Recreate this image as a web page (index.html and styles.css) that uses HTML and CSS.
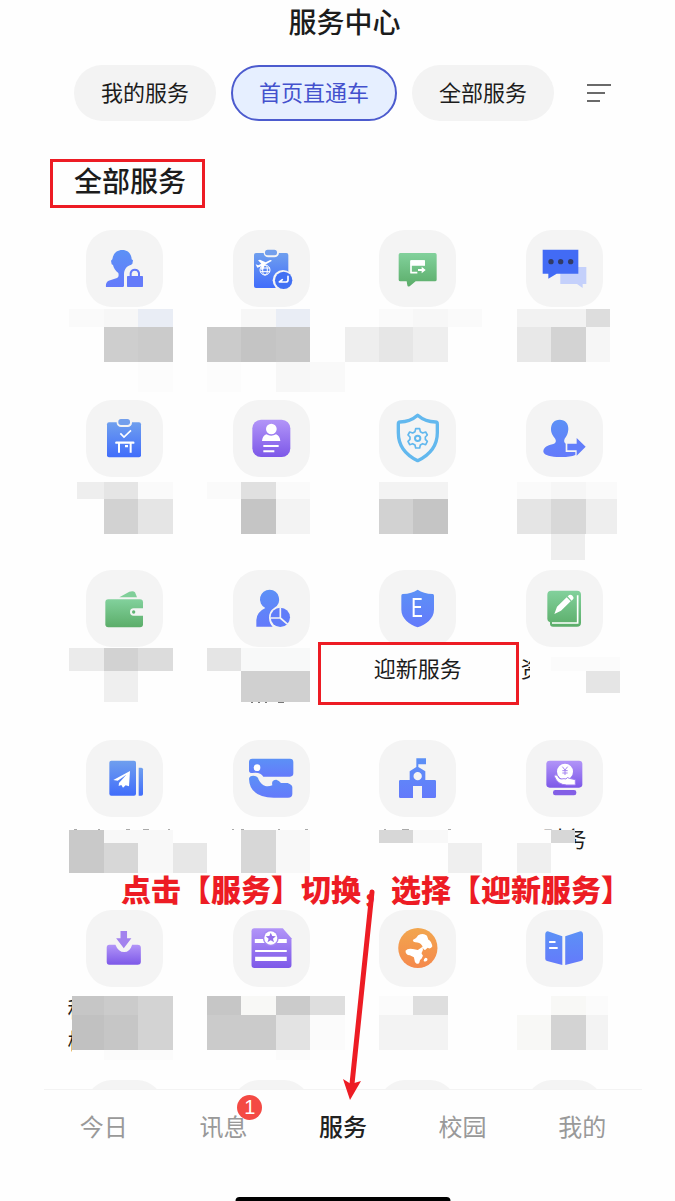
FILE: index.html
```
<!DOCTYPE html>
<html lang="zh-CN">
<head>
    <meta charset="UTF-8">
    <meta name="viewport" content="width=device-width, initial-scale=1.0">
    <link rel="stylesheet" href="styles.css">
    <title>服务中心</title>
</head>
<body>
    <svg class="defs" width="0" height="0" aria-hidden="true">
        <defs>
            <linearGradient id="blue" x1="0" y1="0" x2="0" y2="1"><stop offset="0" stop-color="#6f9fee"/><stop offset="1" stop-color="#416dfb"/></linearGradient>
            <linearGradient id="indigo" x1="0" y1="0" x2="0" y2="1"><stop offset="0" stop-color="#5c91f6"/><stop offset="1" stop-color="#647afb"/></linearGradient>
            <linearGradient id="purple" x1="0" y1="0" x2="0" y2="1"><stop offset="0" stop-color="#b295f8"/><stop offset="1" stop-color="#7d58e8"/></linearGradient>
            <linearGradient id="green" x1="0" y1="0" x2="0" y2="1"><stop offset="0" stop-color="#82d19c"/><stop offset="1" stop-color="#5bad69"/></linearGradient>
            <linearGradient id="orange" x1="0" y1="0" x2="0" y2="1"><stop offset="0" stop-color="#f2a64e"/><stop offset="1" stop-color="#f5894c"/></linearGradient>
        </defs>
    </svg>
    <div class="app">
        <header>
            <h1>服务中心</h1>
            <div class="tabs">
                <button class="tab">我的服务</button>
                <button class="tab tab-active">首页直通车</button>
                <button class="tab">全部服务</button>
                <button class="filter" aria-label="筛选">
                    <svg width="24" height="20" viewBox="0 0 24 20" stroke="#3a3a3a" stroke-width="1.6"><path d="M0 2h24M0 10h18M0 18h13"/></svg>
                </button>
            </div>
        </header>
        <main>
            <h2 class="marked">全部服务</h2>
            <div class="grid">
                <a class="service" href="#">
                    <svg class="icon" viewBox="78 30 231 231">
                        <path fill="url(#indigo)" d="M187 90c17 0 27 11 28 28l4 3-2 11-5 3c-12 3-20 13-20 28v34q0 4-4 4h-50q-2-14 8-19l25-8q7-3 4-15c-9-7-14-14-16-24l-4-2-2-11 4-4c2-17 13-28 30-28z"/>
                        <rect x="201" y="168" width="48" height="33" rx="2" fill="#647bfa"/>
                        <path fill="none" stroke="#647bfa" stroke-width="6" d="M212 170v-11a13 13 0 0 1 25 0v11"/>
                    </svg>
                </a>
                <a class="service" href="#">
                    <svg class="icon" viewBox="518 30 231 231">
                        <rect x="581" y="99" width="103" height="105" rx="6" fill="url(#blue)"/>
                        <rect x="610" y="84" width="46" height="28" rx="14" fill="#f4f4f4"/>
                        <rect x="614" y="89" width="36" height="17" rx="8" fill="#739fec"/>
                        <path fill="#fff" d="M586 133l8 3 9-5-10-10 6-2 17 8 12-6q6-2 6 2l-21 12-4 13-6 3 0-12-12 4z"/>
                        <g fill="none" stroke="#fff" stroke-width="3"><circle cx="614" cy="150" r="15"/><ellipse cx="614" cy="150" rx="7" ry="15"/><path d="M600 144h29M600 155h29"/></g>
                        <circle cx="668" cy="181" r="31" fill="#f4f4f4"/>
                        <circle cx="670" cy="181" r="26" fill="#4170f3"/>
                        <path fill="none" stroke="#fff" stroke-width="5" stroke-linecap="round" stroke-linejoin="round" d="M683 169v11q0 6-6 6h-20l9-7"/>
                    </svg>
                </a>
                <a class="service" href="#">
                    <svg class="icon" viewBox="147 30 231 231">
                        <path fill="url(#green)" d="M211 99h104q5 0 5 5v75q0 5-5 5h-58l-17 14q-7 4-8-2l-2-12h-19q-5 0-5-5v-75q0-5 5-5z"/>
                        <path fill="none" stroke="#fff" stroke-width="5" stroke-linejoin="round" d="M262 158h-19v-35h38v13"/>
                        <path fill="#fff" d="M242 121h43v16h-43zM264 147h11v-7l12 10-12 10v-7h-11z"/>
                    </svg>
                </a>
                <a class="service" href="#">
                    <svg class="icon" viewBox="587 30 231 231">
                        <path fill="#c4d0fb" d="M690 141h78v51h-11v12l-17-12h-50z"/>
                        <path fill="#426bf5" d="M637 89h107v72h-65l-25 15v-15h-17z"/>
                        <g fill="#313b66"><circle cx="662" cy="125" r="8"/><circle cx="691" cy="125" r="8"/><circle cx="721" cy="125" r="8"/></g>
                    </svg>
                </a>

                <a class="service" href="#">
                    <svg class="icon" viewBox="78 30 231 231">
                        <rect x="141" y="97" width="102" height="105" rx="6" fill="url(#blue)"/>
                        <rect x="170" y="82" width="46" height="29" rx="13" fill="#f4f4f4"/>
                        <rect x="175" y="87" width="35" height="18" rx="8" fill="#739fec"/>
                        <path fill="none" stroke="#fff" stroke-width="5" d="M181 130l11 11 21-20"/>
                        <path fill="none" stroke="#fff" stroke-width="7" stroke-linecap="round" d="M169 158h51"/>
                        <path fill="none" stroke="#fff" stroke-width="6" d="M177 158v30M212 158v30"/>
                        <path fill="#fff" d="M195 165h9v7h-9z"/>
                    </svg>
                </a>
                <a class="service" href="#">
                    <svg class="icon" viewBox="518 30 231 231">
                        <rect x="576" y="89" width="114" height="112" rx="26" fill="url(#purple)"/>
                        <circle cx="633" cy="117" r="16" fill="#fff"/>
                        <path fill="#fff" d="M605 153q1-15 13-20 14 8 29 0 12 5 13 20z"/>
                        <path fill="none" stroke="#fff" stroke-width="6" d="M609 168h46M609 184h33"/>
                    </svg>
                </a>
                <a class="service" href="#">
                    <svg class="icon" viewBox="147 30 231 231">
                        <path fill="none" stroke="#62b8ee" stroke-width="10" stroke-linejoin="round" d="M263 76q23 20 54 20 5 0 5 6v26c0 42-24 67-59 84-35-17-58-42-58-84v-26q0-6 5-6 30 0 53-20z"/>
                        <path fill="none" stroke="#62b8ee" stroke-width="5" stroke-linejoin="round" d="M257 116h12l2 9 7 4 9-3 5 9-6 6v7l6 6-5 10-9-3-7 4-2 9h-12l-2-9-7-4-9 3-5-10 6-6v-7l-6-6 5-9 9 3 7-4z"/>
                        <circle cx="263" cy="145" r="8" fill="none" stroke="#62b8ee" stroke-width="6"/>
                    </svg>
                </a>
                <a class="service" href="#">
                    <svg class="icon" viewBox="587 30 231 231">
                        <path fill="url(#indigo)" d="M688 89c17 0 27 12 26 28-1 15-5 21-11 29q-4 10 3 15v25h29v9q-18 7-47 6c-25 0-47-5-49-16 0-14 14-20 30-23q11-4 6-15c-7-10-13-16-13-30 0-16 9-28 26-28z"/>
                        <path fill="#627dfa" d="M711 161h28v-17l27 26-27 27v-16h-28z"/>
                    </svg>
                </a>

                <a class="service" href="#">
                    <svg class="icon" viewBox="78 28 231 231">
                        <path fill="#80cf99" d="M178 110l30-17q12-4 17 2l6 15z"/>
                        <rect x="136" y="116" width="113" height="84" rx="9" fill="url(#green)"/>
                        <path fill="#f4f4f4" d="M249 143h-28a11 11 0 0 0 0 22h28z"/>
                        <circle cx="221" cy="154" r="5" fill="#62b676"/>
                    </svg>
                </a>
                <a class="service" href="#">
                    <svg class="icon" viewBox="518 28 231 231">
                        <path fill="url(#indigo)" d="M628 87a29 29 0 0 1 14 54q-17 11-16 31 1 17 11 26h-49v-20q1-24 27-36a29 29 0 0 1 13-55z"/>
                        <circle cx="660" cy="170" r="29" fill="#617df9"/>
                        <path fill="none" stroke="#f4f4f4" stroke-width="5" d="M660 140v32h-30M660 172l22 19"/>
                    </svg>
                </a>
                <a class="service" href="#">
                    <svg class="icon" viewBox="207 28 231 231">
                        <path fill="url(#indigo)" d="M323 87q17 12 45 13 4 0 4 5v42c0 27-25 45-49 53-24-8-49-26-49-53v-42q0-5 4-5 28-1 45-13z"/>
                        <path fill="none" stroke="#fff" stroke-width="6" d="M335 115h-24v51h25M311 139h22"/>
                    </svg>
                    <span class="label highlight">迎新服务</span>
                </a>
                <a class="service" href="#">
                    <svg class="icon" viewBox="648 28 231 231">
                        <path fill="url(#green)" d="M724 90h77q12 0 12 12v84q0 12-12 12h-72q-9 0-9-9v-4q-8-2-8-10v-73q0-12 12-12z"/>
                        <path fill="none" stroke="#fff" stroke-width="5" d="M803 104v83h-77"/>
                        <path fill="#fff" d="M733 160l8-22 29-28 12 12-29 28zM773 107l5-4q4-2 8 1l4 5q2 4-1 7l-4 4z"/>
                    </svg>
                    <span class="label label-four">资</span>
                </a>

                <a class="service" href="#">
                    <svg class="icon" viewBox="78 28 231 231">
                        <rect x="148" y="90" width="80" height="105" rx="6" fill="url(#blue)"/>
                        <path fill="url(#blue)" d="M236 111h8q5 0 5 5v74q0 5-5 5h-8z"/>
                        <path fill="#fff" d="M160 148l50-27-3 46-10-3-8 7-5-8-8 3 1-9 22-25-26 18z"/>
                    </svg>
                </a>
                <a class="service" href="#">
                    <svg class="icon" viewBox="518 28 231 231">
                        <path fill="url(#indigo)" d="M576 84h113q10 0 10 10v34q0 10-10 10h-80q-9-15-33-11-10 0-10-7V94q0-10 10-10z"/>
                        <circle cx="590" cy="111" r="10" fill="#fff"/>
                        <path fill="url(#indigo)" d="M566 144q1-9 13-9 14 1 16 12 9 16 20 19 10 2 21-2-4-17 12-17 8 3 14 10h20q14 5 14 13v20q0 11-13 11h-43q-73-2-74-57z"/>
                    </svg>
                </a>
                <a class="service" href="#">
                    <svg class="icon" viewBox="147 28 231 231">
                        <path fill="url(#indigo)" fill-rule="evenodd" d="M259 83h29v18h-23v8l21 13v26h28q4 0 4 4v46q0 4-4 4h-38v-36h-27v36h-38q-4 0-4-4v-46q0-4 4-4h28v-26l20-13zM263 124a12 12 0 1 0 0 25 12 12 0 0 0 0-25z"/>
                    </svg>
                </a>
                <a class="service" href="#">
                    <svg class="icon" viewBox="587 28 231 231">
                        <rect x="648" y="90" width="108" height="81" rx="10" fill="url(#purple)"/>
                        <rect x="668" y="178" width="70" height="16" rx="7" fill="#835fe6"/>
                        <circle cx="704" cy="123" r="24" fill="#fff"/>
                        <path fill="none" stroke="#a483f0" stroke-width="3" d="M696 108l8 10 8-10M704 118v15M696 120h16M696 127h16"/>
                        <path fill="#fff" stroke="#a07ef0" stroke-width="3" d="M672 137q2-7 9-3 6 13 12 11 9-2 14 0 3-8 10-2l18 4v16h-26q-28-1-37-26z"/>
                    </svg>
                    <span class="label">财务</span>
                </a>

                <a class="service" href="#">
                    <svg class="icon" viewBox="72 42 212 231" preserveAspectRatio="none">
                        <path fill="#a282ee" d="M167 105h18v22h12l-21 30-21-30h12z"/>
                        <path fill="url(#purple)" d="M136 146h17q8 22 24 22t22-22h15q9 0 9 9v42q0 9-9 9h-78q-7 0-7-9v-42q0-9 7-9z"/>
                    </svg>
                    <span class="label label-long">科<br>校</span>
                </a>
                <a class="service" href="#">
                    <svg class="icon" viewBox="474 42 212 231" preserveAspectRatio="none">
                        <path fill="url(#purple)" d="M533 97h78l24 30v80q0 9-8 9h-94q-8 0-8-9v-101q0-9 8-9z"/>
                        <path fill="#fff" d="M534 129h88v12h-88zM535 162h87v6h-87zM535 182h87v13h-87z"/>
                        <ellipse cx="578" cy="126" rx="22" ry="24" fill="#a587f3"/>
                        <ellipse cx="578" cy="126" rx="18" ry="20" fill="#fff"/>
                        <path fill="#9470ec" d="M578 110l4 10 10 1-8 7 3 11-9-6-9 6 3-11-8-7 10-1z"/>
                    </svg>
                </a>
                <a class="service" href="#">
                    <svg class="icon" viewBox="877 42 212 231" preserveAspectRatio="none">
                        <ellipse cx="984" cy="156" rx="54" ry="60" fill="url(#orange)"/>
                        <path fill="#fff" d="M970 132q11-5 15-14 14-8 24 1l4 12q8 3 11 20-5 10-13 4l-7 7q-5 0-8-13-7-10-19-10-6 0-7-7zM950 164q6-8 20-5l14 3 13-10 1 10-4 10 4 7-4 9q-5 2-6 12-6 8-12-2l-3-14-11-6q-12-1-12-14zM1005 185q7 0 5 8-5 6-10 2 0-8 5-10z"/>
                    </svg>
                </a>
                <a class="service" href="#">
                    <svg class="icon" viewBox="1281 42 212 231" preserveAspectRatio="none">
                        <path fill="url(#indigo)" d="M1341 106l40 15v86l-42-12q-5-2-5-7v-72q0-9 7-10zM1431 106l-42 15v86l43-12q6-2 6-7v-72q0-9-7-10z"/>
                        <path fill="none" stroke="#fff" stroke-width="6" stroke-linecap="round" d="M1347 138h13M1347 156h19"/>
                    </svg>
                </a>

                <a class="service" href="#"><span class="icon"></span></a>
                <a class="service" href="#"><span class="icon"></span></a>
                <a class="service" href="#"><span class="icon"></span></a>
                <a class="service" href="#"><span class="icon"></span></a>
            </div>
        </main>
        <nav>
            <a href="#">今日</a>
            <a href="#">讯息<span class="badge">1</span></a>
            <a class="current" href="#">服务</a>
            <a href="#">校园</a>
            <a href="#">我的</a>
            <div class="home-bar"></div>
        </nav>
    </div>

    <!-- mosaic over the service names -->
    <svg class="overlay" viewBox="0 0 675 1201" preserveAspectRatio="none" shape-rendering="crispEdges" aria-hidden="true">
        <g>
            <path fill="#fafafa" d="M69 309h35v18h-35zM379 309h34v18h-34zM448 309h34v18h-34z"/>
            <path fill="#f7f7f7" d="M104 309h34v18h-34zM241 309h35v18h-35zM413 309h35v18h-35zM276 362h34v30h-34z"/>
            <path fill="#e9edf5" d="M138 309h35v18h-35zM276 309h34v18h-34z"/>
            <path fill="#cecece" d="M104 327h34v35h-34z"/>
            <path fill="#cbcbcb" d="M138 327h35v35h-35zM207 327h34v35h-34z"/>
            <path fill="#c4c4c4" d="M241 327h35v35h-35z"/>
            <path fill="#c7c7c7" d="M276 327h34v35h-34z"/>
            <path fill="#fcfcfc" d="M138 362h35v30h-35zM207 362h34v30h-34z"/>
            <path fill="#f9f9f9" d="M310 362h35v30h-35z"/>
            <path fill="#eee" d="M345 327h103v35h-103z"/>
            <path fill="#e6e6e6" d="M379 327h34v35h-34z"/>
            <path fill="#f2f2f2" d="M517 309h69v18h-69z"/>
            <path fill="#ddd" d="M586 309h24v18h-24z"/>
            <path fill="#e8e8e8" d="M517 327h34v35h-34z"/>
            <path fill="#d3d3d3" d="M551 327h35v35h-35z"/>
            <path fill="#f6f6f6" d="M586 327h24v35h-24z"/>
        </g>
        <g>
            <path fill="#eee" d="M77 482h27v17h-27zM586 499h31v35h-31zM551 534h34v26h-34z"/>
            <path fill="#e5e5e5" d="M104 482h34v17h-34zM138 499h35v35h-35zM517 499h34v35h-34z"/>
            <path fill="#fafafa" d="M138 482h35v17h-35zM207 482h34v17h-34zM276 482h34v17h-34zM517 482h100v17h-100z"/>
            <path fill="#d2d2d2" d="M104 499h34v35h-34zM379 499h34v35h-34z"/>
            <path fill="#e0e0e0" d="M241 482h35v17h-35z"/>
            <path fill="#c5c5c5" d="M241 499h35v35h-35zM413 499h35v35h-35z"/>
            <path fill="#f3f3f3" d="M276 499h34v35h-34zM379 482h69v17h-69z"/>
            <path fill="#f6f6f6" d="M551 482h35v17h-35z"/>
            <path fill="#d8d8d8" d="M551 499h35v35h-35z"/>
        </g>
        <g>
            <path fill="#fefefe" d="M530 655h60v38h-60z"/>
            <path fill="#ebebeb" d="M69 648h35v23h-35z"/>
            <path fill="#d2d2d2" d="M104 648h34v23h-34z"/>
            <path fill="#dcdcdc" d="M138 648h35v23h-35z"/>
            <path fill="#efefef" d="M104 671h34v31h-34z"/>
            <path fill="#e5e5e5" d="M207 648h34v23h-34zM586 671h34v22h-34z"/>
            <path fill="#f8f9f9" d="M241 648h69v23h-69z"/>
            <path fill="#d0d0d0" d="M241 671h69v31h-69z"/>
            <path fill="#fbfbfb" d="M551 657h69v14h-69z"/>
            <path fill="#777" d="M251 702h2v1h-2zM258 702h2v1h-2zM265 702h2v1h-2zM278 702h6v1h-6z"/>
        </g>
        <g>
            <path fill="#fefefe" d="M540 830h35v30h-35z"/>
            <path fill="#c9c9c9" d="M69 830h35v43h-35z"/>
            <path fill="#f8f8f8" d="M104 830h34v13h-34zM138 830h35v43h-35zM276 830h34v43h-34zM413 830h35v13h-35z"/>
            <path fill="#d7d7d7" d="M104 843h34v30h-34zM241 830h35v43h-35zM379 830h34v13h-34zM551 830h24v13h-24z"/>
            <path fill="#e7e7e7" d="M173 843h34v30h-34z"/>
            <path fill="#efefef" d="M448 843h34v30h-34zM517 843h34v30h-34z"/>
            <path fill="#aaa" d="M74 829h3v1h-3zM98 829h2v1h-2zM126 829h4v1h-4zM143 829h6v1h-6zM168 829h2v1h-2zM232 829h2v1h-2zM241 829h3v1h-3zM278 829h2v1h-2zM305 829h3v1h-3zM384 829h2v1h-2zM402 829h7v1h-7zM448 829h3v1h-3z"/>
        </g>
        <g>
            <path fill="#fefefe" d="M72 996h40v64h-40z"/>
            <path fill="#c6c6c6" d="M72 996h32v19h-32zM104 1015h34v35h-34zM207 996h34v19h-34z"/>
            <path fill="#cbcbcb" d="M104 996h34v19h-34zM207 1015h69v35h-69zM276 996h34v19h-34z"/>
            <path fill="#d3d3d3" d="M138 996h35v54h-35zM551 1015h35v35h-35z"/>
            <path fill="#c1c1c1" d="M72 1015h32v35h-32z"/>
            <path fill="#fbfbfb" d="M104 1050h69v10h-69zM276 1050h34v10h-34zM310 1015h35v35h-35zM379 996h34v19h-34zM586 996h22v19h-22z"/>
            <path fill="#f8f8f6" d="M241 996h35v19h-35zM551 996h35v19h-35zM517 1015h34v35h-34z"/>
            <path fill="#dedede" d="M310 996h35v19h-35zM413 996h35v19h-35z"/>
            <path fill="#e3e3e3" d="M276 1015h34v35h-34z"/>
            <path fill="#f3f3f3" d="M379 1015h69v35h-69zM586 1015h22v35h-22z"/>
        </g>
    </svg>

    <p class="note">点击【服务】切换，选择【迎新服务】</p>
    <svg class="overlay" viewBox="0 0 675 1201" preserveAspectRatio="none" aria-hidden="true">
        <path fill="none" stroke="#ed1c24" stroke-width="5" stroke-linecap="round" d="M372 892l-20 192"/>
        <path fill="#ed1c24" d="M350 1100l-7-21 8 5 10-3z"/>
    </svg>
</body>
</html>
```

FILE: styles.css
```
*{
    box-sizing: border-box;
}

body{
    margin: 0;
    position: relative;
    background-color: #fefefe;
    color: #1c1c1c;
    font-family: "Noto Sans CJK SC", "Noto Sans", sans-serif;
}

a{
    color: inherit;
    text-decoration: none;
}

button{
    font: inherit;
    color: inherit;
    border: none;
    cursor: pointer;
}

.defs{
    position: absolute;
}

.app{
    height: 100vh;
    margin: 0 30px 0 44px;
    display: flex;
    flex-direction: column;
}

h1{
    margin: 0 0 23px;
    font-size: 28px;
    font-weight: 500;
    line-height: 42px;
    text-align: center;
}

.tabs{
    display: flex;
    align-items: center;
    gap: 15px;
    padding-left: 30px;
}

.tab{
    height: 56px;
    padding: 0 27px 4px;
    border-radius: 28px;
    background-color: #f3f3f3;
    font-size: 22px;
    line-height: 28px;
    white-space: nowrap;
}

.tab-active{
    padding: 0 26px 4px;
    border: 2px solid #4c5bce;
    background-color: #e6efff;
    color: #4351cd;
}

.filter{
    display: flex;
    margin-left: 18px;
    padding: 0;
    background: none;
}

main{
    flex: 1;
    min-height: 0;
    overflow: hidden;
    padding: 38px 7px 0;
}

.marked{
    width: fit-content;
    margin: 0 0 22px -1px;
    padding: 0 16px 7px 21px;
    border: 3px solid #ed1c24;
    font-size: 28px;
    font-weight: 500;
    line-height: 36px;
}

.grid{
    display: grid;
    grid-template-columns: repeat(4, 1fr);
    grid-auto-rows: 170px;
}

.service{
    display: flex;
    flex-direction: column;
    align-items: center;
    gap: 4px;
}

.icon{
    width: 77px;
    height: 77px;
    flex: none;
    border-radius: 26px;
    background-color: #f4f4f4;
}

.label{
    font-size: 22px;
    line-height: 32px;
}

.label-four{
    width: 88px;
}

.label-long{
    width: 114px;
}

.highlight{
    position: relative;
    z-index: 0;
}

.highlight::before{
    content: "";
    position: absolute;
    z-index: -1;
    inset: -9px -57px -22px -56px;
    border: 3px solid #ed1c24;
    background-color: #fefefe;
}

nav{
    position: relative;
    height: 112px;
    margin-right: 3px;
    padding-top: 18px;
    display: flex;
    border-top: 1px solid #f3f3f3;
    color: #999;
    font-size: 24px;
    line-height: 36px;
}

nav a{
    flex: 1;
    position: relative;
    text-align: center;
}

.current{
    color: #222;
    font-weight: 500;
}

.badge{
    position: absolute;
    top: -13px;
    left: calc(50% + 14px);
    width: 25px;
    height: 25px;
    border-radius: 50%;
    background-color: #f44a44;
    color: #fff;
    font-family: "Liberation Sans", sans-serif;
    font-size: 20px;
    line-height: 25px;
}

.home-bar{
    position: absolute;
    left: 50%;
    bottom: 0;
    width: 215px;
    height: 4px;
    transform: translateX(-50%);
    border-radius: 4px 4px 0 0;
    background-color: #000;
}

.overlay{
    position: absolute;
    top: 0;
    left: 0;
    width: 100%;
    height: 100%;
    pointer-events: none;
}

.note{
    position: absolute;
    top: 866px;
    left: 121px;
    margin: 0;
    color: #ed1c24;
    font-size: 30px;
    font-weight: 900;
    line-height: 44px;
    white-space: nowrap;
}
```
